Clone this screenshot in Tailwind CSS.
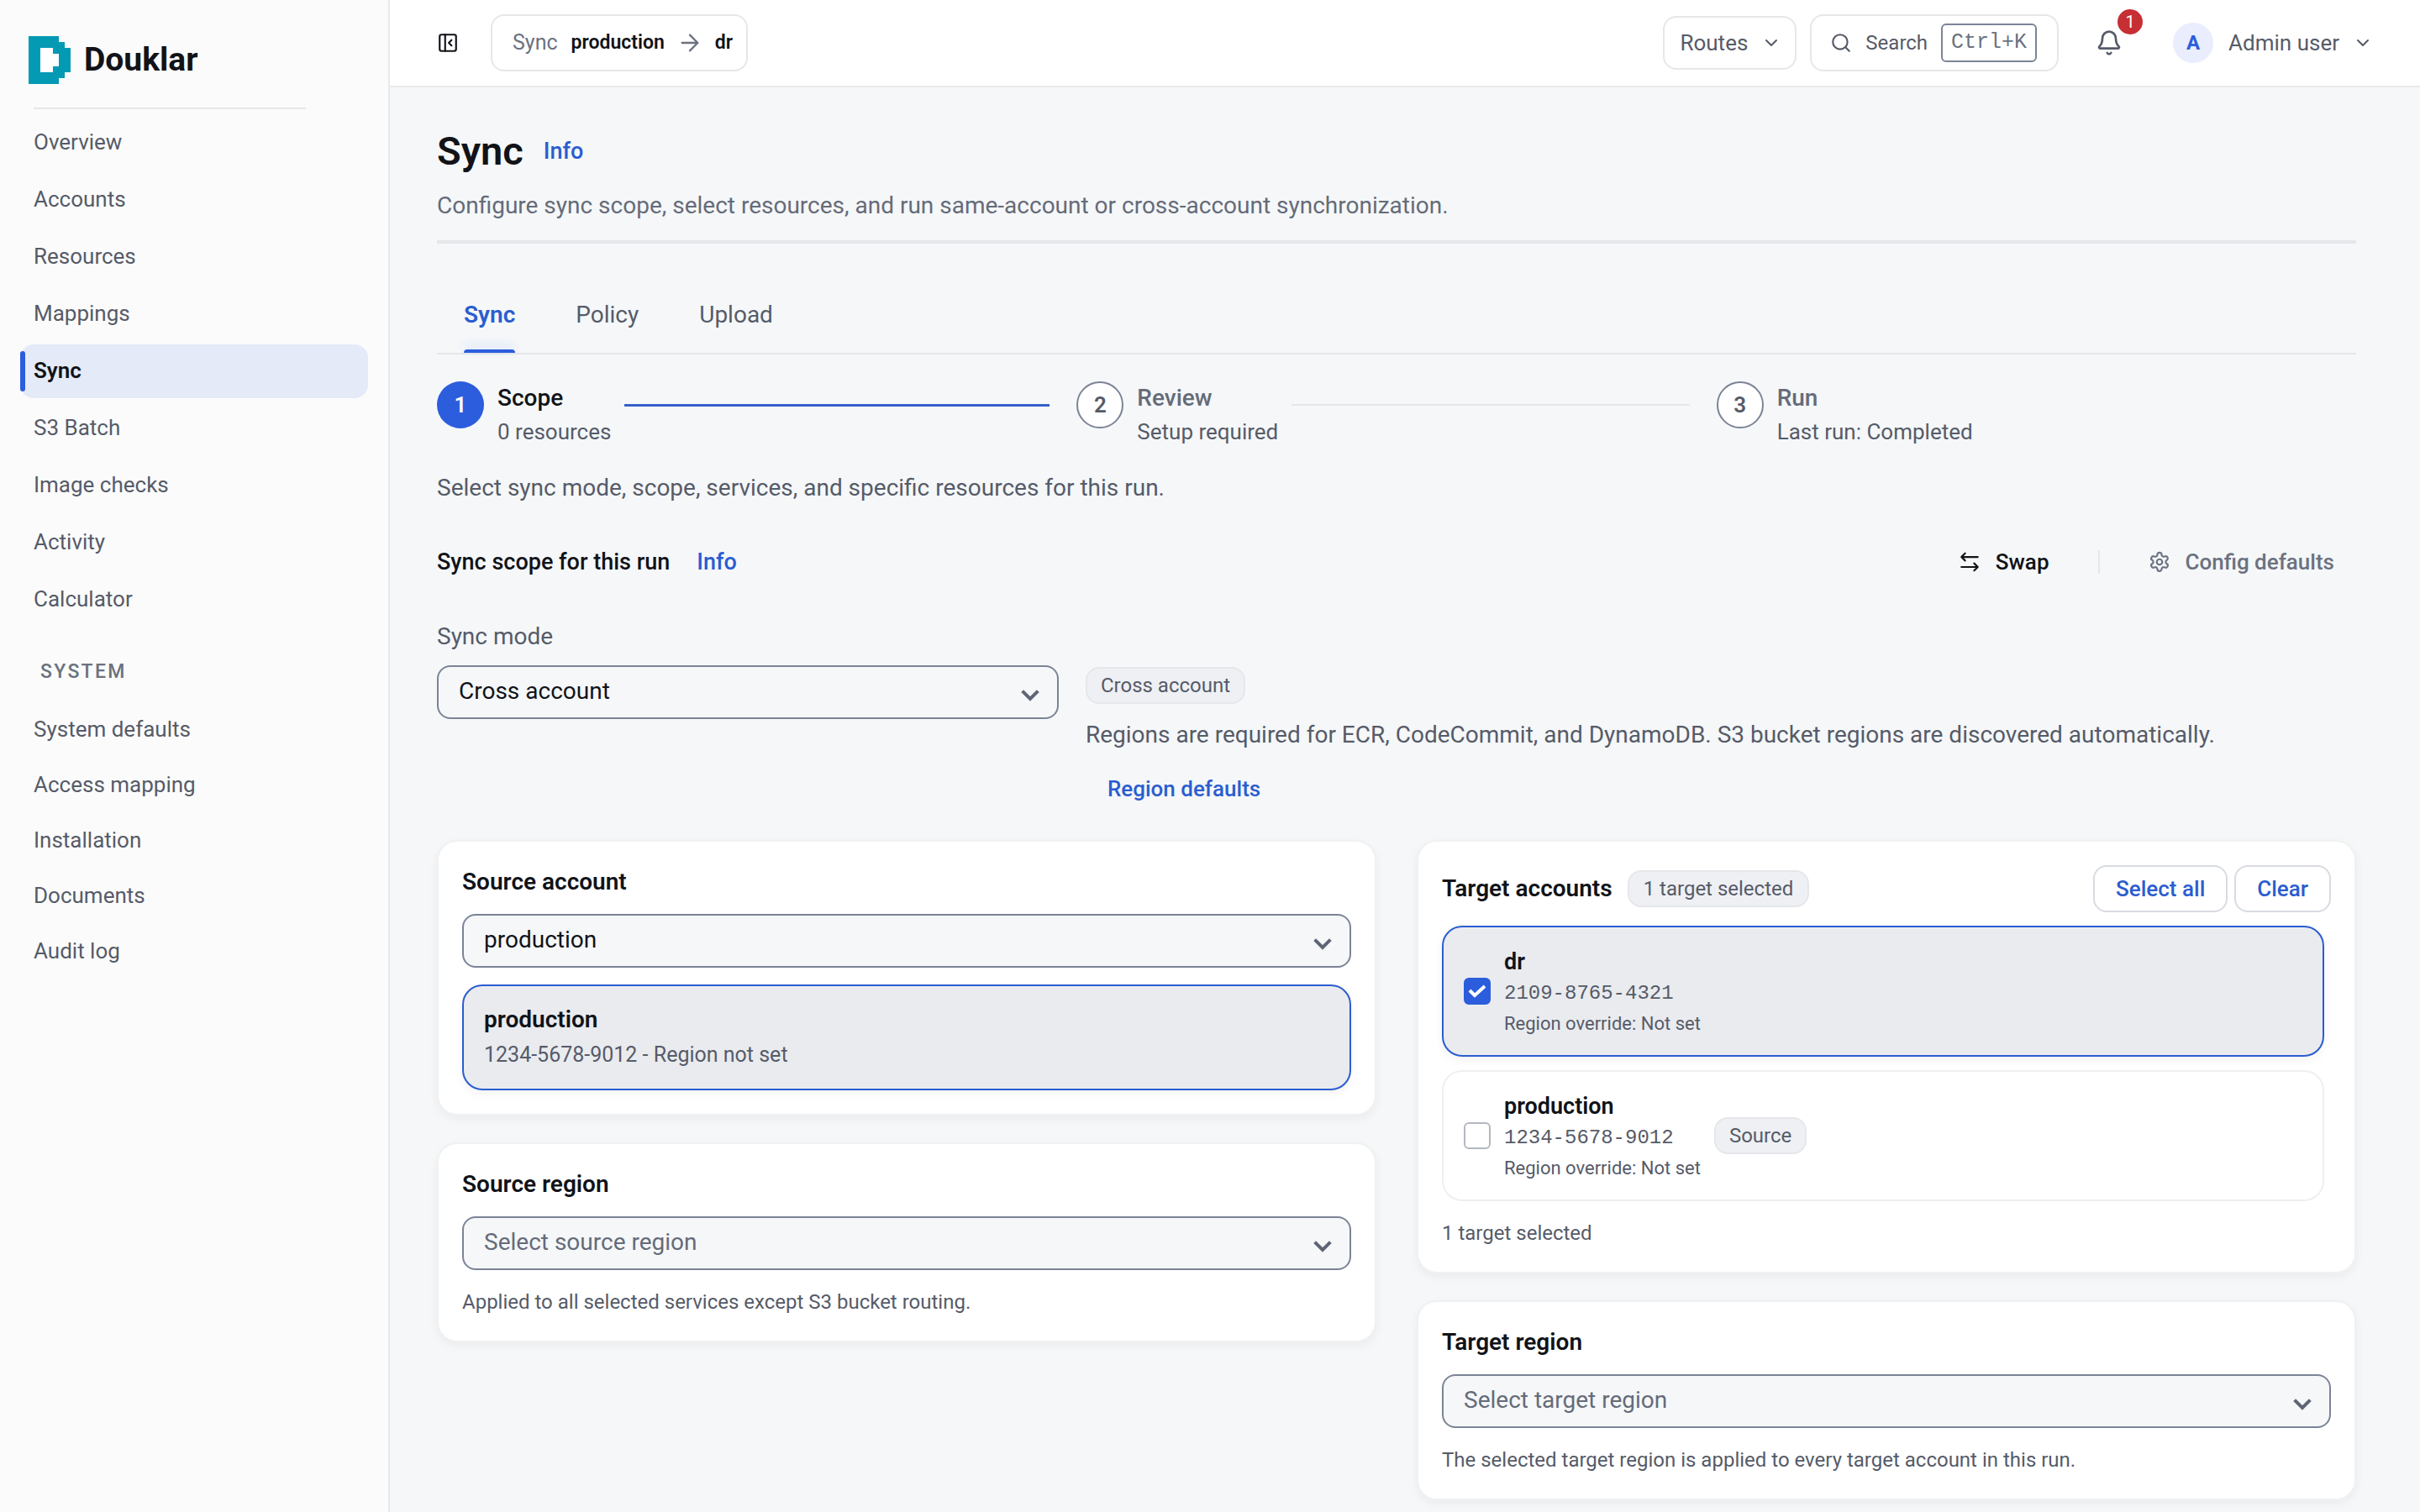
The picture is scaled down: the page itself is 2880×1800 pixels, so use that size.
<!DOCTYPE html>
<html lang="en">
<head>
<meta charset="utf-8">
<meta name="viewport" content="width=device-width, initial-scale=1">
<title>Sync - Douklar</title>
<script src="https://cdn.jsdelivr.net/npm/@tailwindcss/browser@4"></script>
</head>
<body class="flex min-h-screen bg-[#f5f7f9] font-['Roboto',sans-serif] text-[28px] leading-10 text-[#565b68]">

<aside class="w-[464px] shrink-0 border-r-2 border-[#e8e9eb] bg-[#fbfbfb] pb-8 text-[26px]">
  <a href="#" class="ml-[34px] flex h-32 items-center gap-4 pt-[14px] text-[39px] font-bold text-[#111318]">
    <svg class="h-[57px] w-[50px]" viewBox="0 0 7 8" fill="#059ab4" shape-rendering="crispEdges" aria-hidden="true"><path fill-rule="evenodd" d="M0 0H5V1H6V2H7V6H6V7H5V8H0ZM2 2V6H4V5H5V3H4V2Z"/><path fill="#fff" d="M2 2H4V3H5V5H4V6H2Z"/></svg>
    Douklar
  </a>
  <hr class="mr-[98px] ml-10 border-t-2 border-[#e5e7e9]">
  <nav class="mt-2 mr-6 ml-6 flex flex-col gap-1" aria-label="Main">
    <a href="#" class="flex h-16 items-center px-4 pb-[2px]">Overview</a>
    <a href="#" class="flex h-16 items-center px-4 pb-[2px]">Accounts</a>
    <a href="#" class="flex h-16 items-center px-4 pb-[2px]">Resources</a>
    <a href="#" class="flex h-16 items-center px-4 pb-[2px]">Mappings</a>
    <a href="#" aria-current="page" class="relative flex h-16 items-center rounded-2xl bg-[#e5eaf8] px-4 pb-[2px] font-semibold text-[#111318]"><span class="absolute top-2 left-0 h-12 w-[6px] rounded-full bg-[#2b5ddc]"></span>Sync</a>
    <a href="#" class="flex h-16 items-center px-4 pb-[2px]">S3 Batch</a>
    <a href="#" class="flex h-16 items-center px-4 pb-[2px]">Image checks</a>
    <a href="#" class="flex h-16 items-center px-4 pb-[2px]">Activity</a>
    <a href="#" class="flex h-16 items-center px-4 pb-[2px]">Calculator</a>
  </nav>
  <h2 class="mt-[34px] ml-12 text-[23px] font-medium tracking-widest text-[#6b7280]">SYSTEM</h2>
  <nav class="mt-4 mr-6 ml-6 flex flex-col gap-[2px]" aria-label="System">
    <a href="#" class="flex h-16 items-center px-4">System defaults</a>
    <a href="#" class="flex h-16 items-center px-4">Access mapping</a>
    <a href="#" class="flex h-16 items-center px-4">Installation</a>
    <a href="#" class="flex h-16 items-center px-4">Documents</a>
    <a href="#" class="flex h-16 items-center px-4">Audit log</a>
  </nav>
</aside>

<div class="min-w-0 flex-1">
  <header class="flex h-[104px] items-center border-b-2 border-[#eaebed] bg-white pr-14 pl-14 text-[26px]">
    <button class="text-[#111318]" aria-label="Collapse sidebar">
      <svg class="size-[26px]" viewBox="0 0 24 24" fill="none" stroke="currentColor" stroke-width="2" stroke-linecap="round" stroke-linejoin="round"><rect x="3" y="3" width="18" height="18" rx="2"/><path d="M9 3v18M16 15l-3-3 3-3"/></svg>
    </button>
    <div class="ml-[38px] flex h-[68px] items-center rounded-2xl border-2 border-[#e5e7e9] pr-4 pl-6 text-[23px]">
      <span class="text-[25px] text-[#6b7280]">Sync</span>
      <strong class="ml-4 font-semibold text-[#111318]">production</strong>
      <svg class="mx-4 size-7 text-[#6b7280]" viewBox="0 0 24 24" fill="none" stroke="currentColor" stroke-width="2" stroke-linecap="round" stroke-linejoin="round"><path d="M4 12h16M12 4l8 8-8 8"/></svg>
      <strong class="font-semibold text-[#111318]">dr</strong>
    </div>
    <button class="ml-auto flex h-16 items-center gap-4 rounded-2xl border-2 border-[#e5e7e9] pr-4 pl-[18px]">Routes
      <svg class="size-6" viewBox="0 0 24 24" fill="none" stroke="currentColor" stroke-width="2" stroke-linecap="round" stroke-linejoin="round"><path d="M6 9l6 6 6-6"/></svg>
    </button>
    <button class="ml-4 flex h-[68px] items-center rounded-2xl border-2 border-[#e5e7e9] pr-6 pl-[22px] text-[24px]">
      <svg class="size-[26px]" viewBox="0 0 24 24" fill="none" stroke="currentColor" stroke-width="2" stroke-linecap="round"><circle cx="11" cy="11" r="8"/><path d="M21 21l-4.3-4.3"/></svg>
      <span class="mr-4 ml-4">Search</span>
      <kbd class="flex h-[46px] items-center rounded-md border-2 border-[#7b8496] px-[10px] font-['Liberation_Mono',monospace] text-[25px] text-[#6b7280]">Ctrl+K</kbd>
    </button>
    <button class="relative ml-11 h-8 w-8" aria-label="Notifications">
      <svg class="size-8" viewBox="0 0 24 24" fill="none" stroke="currentColor" stroke-width="2" stroke-linecap="round" stroke-linejoin="round"><path d="M10.3 21a1.9 1.9 0 0 0 3.4 0M3.3 15.3A1 1 0 0 0 4 17h16a1 1 0 0 0 .7-1.7C19.4 14 18 12.5 18 8A6 6 0 0 0 6 8c0 4.500-1.400 6-2.700 7.300Z"/></svg>
      <span class="absolute -top-6 left-[26px] flex size-[30px] items-center justify-center rounded-full bg-[#c62f33] text-[20px] leading-none text-white">1</span>
    </button>
    <button class="ml-[60px] flex items-center">
      <span class="flex size-12 items-center justify-center rounded-full bg-[#e9edfd] text-[24px] font-bold text-[#2b5ddc]">A</span>
      <span class="mr-4 ml-[18px]">Admin user</span>
      <svg class="size-6" viewBox="0 0 24 24" fill="none" stroke="currentColor" stroke-width="2" stroke-linecap="round" stroke-linejoin="round"><path d="M6 9l6 6 6-6"/></svg>
    </button>
  </header>

  <main class="pt-12 pr-[76px] pb-3 pl-14">
    <div class="border-b-4 border-[#e5e7ea] pb-[21px]">
      <div class="flex items-center gap-6">
        <h1 class="text-[47px] leading-[56px] font-semibold text-[#111318]">Sync</h1>
        <a href="#" class="text-[27px] font-medium text-[#2b5dd0]">Info</a>
      </div>
      <p class="mt-[17px] text-[#656b78]">Configure sync scope, select resources, and run same-account or cross-account synchronization.</p>
    </div>

    <div class="mt-10 flex gap-2 border-b-2 border-[#e5e7ea]" role="tablist">
      <button role="tab" aria-selected="true" class="px-8 pt-[25px] font-semibold text-[#2b5dd0]">Sync<span class="mt-[21px] block h-1 rounded-t-sm bg-[#2b5ddc] shadow-[0_-4px_12px_#2b5ddc33]"></span></button>
      <button role="tab" aria-selected="false" class="px-8 pt-[25px] pb-[25px]">Policy</button>
      <button role="tab" aria-selected="false" class="px-8 pt-[25px] pb-[25px]">Upload</button>
    </div>

    <ol class="mt-8 grid grid-cols-3">
      <li class="flex gap-4 pr-8">
        <span class="flex size-14 shrink-0 items-center justify-center rounded-full bg-[#2b5ddc] text-[26px] font-semibold text-white">1</span>
        <div><p class="font-medium text-[#111318]">Scope</p><p class="text-[26px]">0 resources</p></div>
        <span class="mt-[27px] h-[3px] flex-1 bg-[#3560cc]"></span>
      </li>
      <li class="flex gap-4 pr-8">
        <span class="flex size-14 shrink-0 items-center justify-center rounded-full border-2 border-[#7b8496] bg-white text-[26px] font-semibold">2</span>
        <div><p class="font-medium text-[#656b78]">Review</p><p class="text-[26px]">Setup required</p></div>
        <span class="mt-[27px] h-[2px] flex-1 bg-[#e5e7ea]"></span>
      </li>
      <li class="flex gap-4">
        <span class="flex size-14 shrink-0 items-center justify-center rounded-full border-2 border-[#7b8496] bg-white text-[26px] font-semibold">3</span>
        <div><p class="font-medium text-[#656b78]">Run</p><p class="text-[26px]">Last run: Completed</p></div>
      </li>
    </ol>
    <p class="mt-[27px]">Select sync mode, scope, services, and specific resources for this run.</p>

    <div class="mt-9 flex h-16 items-center">
      <h2 class="text-[27px] font-medium text-[#111318]">Sync scope for this run</h2>
      <a href="#" class="ml-8 text-[27px] font-medium text-[#2b5dd0]">Info</a>
      <button class="ml-auto flex items-center gap-[18px] text-[26px] font-medium text-[#111318]">
        <svg class="size-[26px]" viewBox="0 0 24 24" fill="none" stroke="currentColor" stroke-width="2" stroke-linecap="round" stroke-linejoin="round"><path d="M21 6.500H3M7 2.500l-4 4 4 4M3 17.500h18M17 13.500l4 4-4 4"/></svg>
        Swap
      </button>
      <span class="ml-[58px] h-7 w-[2px] bg-[#e5e7ea]"></span>
      <button class="mr-[26px] ml-[58px] flex items-center gap-[18px] text-[26px] font-medium text-[#6b7280]">
        <svg class="size-[26px]" viewBox="0 0 24 24" fill="none" stroke="currentColor" stroke-width="2" stroke-linecap="round" stroke-linejoin="round"><path d="M9.7 4.100a2.300 2.300 0 0 1 4.600 0 2.300 2.300 0 0 0 3.300 1.900 2.300 2.300 0 0 1 2.300 4 2.300 2.300 0 0 0 0 3.900 2.300 2.300 0 0 1-2.300 4 2.300 2.300 0 0 0-3.300 1.900 2.300 2.300 0 0 1-4.600 0 2.300 2.300 0 0 0-3.300-1.900 2.300 2.300 0 0 1-2.300-4 2.300 2.300 0 0 0 0-3.900 2.300 2.300 0 0 1 2.300-4 2.300 2.300 0 0 0 3.300-1.900"/><circle cx="12" cy="12" r="3"/></svg>
        Config defaults
      </button>
    </div>

    <div class="mt-[37px] grid grid-cols-[23fr_47fr] gap-8">
      <div>
        <label for="mode" class="block">Sync mode</label>
        <div class="relative mt-[14px]">
          <select id="mode" class="block h-16 w-full appearance-none rounded-2xl border-2 border-[#7b8496] bg-[#f5f7f9] px-6 pb-[2px] text-[#111318]"><option>Cross account</option><option>Same account</option></select>
          <svg class="pointer-events-none absolute top-5 right-[18px] size-8 text-[#5f6575]" viewBox="0 0 24 24" fill="none" stroke="currentColor" stroke-width="3"><path d="M5 8l7 7 7-7"/></svg>
        </div>
      </div>
      <div class="flex flex-col items-start pt-14">
        <span class="flex h-11 items-center rounded-2xl border-2 border-[#e5e7ea] bg-[#eef0f4] px-4 text-[24px]">Cross account</span>
        <p class="mt-[17px]">Regions are required for ECR, CodeCommit, and DynamoDB. S3 bucket regions are discovered automatically.</p>
        <button class="mt-3 h-16 px-[26px] text-[26px] font-medium text-[#2b5dd0]">Region defaults</button>
      </div>
    </div>

    <div class="mt-[29px] grid grid-cols-2 items-start gap-12">
      <div class="flex flex-col gap-8">
        <section class="rounded-3xl border-2 border-[#f0f1f2] bg-white p-7 shadow-[0_4px_12px_#0000000d]">
          <label for="src" class="block font-semibold text-[#111318]">Source account</label>
          <div class="relative mt-[18px]">
            <select id="src" class="block h-16 w-full appearance-none rounded-2xl border-2 border-[#7b8496] bg-[#f5f7f9] px-6 pb-[2px] text-[#111318]"><option>production</option><option>dr</option></select>
            <svg class="pointer-events-none absolute top-5 right-[18px] size-8 text-[#5f6575]" viewBox="0 0 24 24" fill="none" stroke="currentColor" stroke-width="3"><path d="M5 8l7 7 7-7"/></svg>
          </div>
          <div class="mt-5 flex flex-col gap-[2px] rounded-3xl border-2 border-[#2b5dd0] bg-[#e9ebef] px-6 py-5 shadow-[0_4px_12px_#0000000d]">
            <p class="font-semibold text-[#111318]">production</p>
            <p class="text-[25px]">1234-5678-9012 - Region not set</p>
          </div>
        </section>
        <section class="rounded-3xl border-2 border-[#f0f1f2] bg-white p-7 shadow-[0_4px_12px_#0000000d]">
          <label for="srcregion" class="block font-semibold text-[#111318]">Source region</label>
          <div class="relative mt-[18px]">
            <select id="srcregion" class="block h-16 w-full appearance-none rounded-2xl border-2 border-[#7b8496] bg-[#f5f7f9] px-6 pb-[2px] text-[#656b78]"><option>Select source region</option></select>
            <svg class="pointer-events-none absolute top-5 right-[18px] size-8 text-[#5f6575]" viewBox="0 0 24 24" fill="none" stroke="currentColor" stroke-width="3"><path d="M5 8l7 7 7-7"/></svg>
          </div>
          <p class="mt-5 text-[24px] leading-9">Applied to all selected services except S3 bucket routing.</p>
        </section>
      </div>

      <div class="flex flex-col gap-8">
        <section class="rounded-3xl border-2 border-[#f0f1f2] bg-white p-7 shadow-[0_4px_12px_#0000000d]">
          <div class="flex items-center">
            <h3 class="font-semibold text-[#111318]">Target accounts</h3>
            <span class="ml-[18px] flex h-11 items-center rounded-2xl border-2 border-[#e5e7ea] bg-[#eef0f4] px-[17px] text-[24px]">1 target selected</span>
            <button class="ml-auto h-14 rounded-2xl border-2 border-[#d8dbe1] px-[25px] text-[26px] font-medium text-[#2b5dd0]">Select all</button>
            <button class="ml-2 h-14 rounded-2xl border-2 border-[#d8dbe1] px-[25px] text-[26px] font-medium text-[#2b5dd0]">Clear</button>
          </div>
          <div class="mt-4 flex flex-col gap-4 pr-2">
            <label class="flex h-[156px] items-center gap-4 rounded-3xl border-2 border-[#2b5dd0] bg-[#e9ebef] px-6 shadow-[0_4px_12px_#0000000d]">
              <span class="relative size-8">
                <input type="checkbox" checked class="peer block size-8 appearance-none rounded-md border-2 border-[#b4b8c0] bg-white checked:border-[#2b5ddc] checked:bg-[#2b5ddc]">
                <svg class="pointer-events-none absolute inset-1 hidden size-6 peer-checked:block" viewBox="0 0 24 24" fill="none" stroke="#fff" stroke-width="4"><path d="M3 11l6 6L21 6"/></svg>
              </span>
              <span class="pt-[2px]">
                <span class="block text-[27px] font-semibold text-[#111318]">dr</span>
                <span class="block font-['Liberation_Mono',monospace] text-[24px] leading-9">2109-8765-4321</span>
                <span class="block text-[22px] leading-9">Region override: Not set</span>
              </span>
            </label>
            <label class="flex h-[156px] items-center gap-4 rounded-3xl border-2 border-[#eeeff1] px-6">
              <span class="relative size-8">
                <input type="checkbox" class="peer block size-8 appearance-none rounded-md border-2 border-[#b4b8c0] bg-white checked:border-[#2b5ddc] checked:bg-[#2b5ddc]">
                <svg class="pointer-events-none absolute inset-1 hidden size-6 peer-checked:block" viewBox="0 0 24 24" fill="none" stroke="#fff" stroke-width="4"><path d="M3 11l6 6L21 6"/></svg>
              </span>
              <span class="pt-[2px]">
                <span class="block text-[27px] font-semibold text-[#111318]">production</span>
                <span class="block font-['Liberation_Mono',monospace] text-[24px] leading-9">1234-5678-9012</span>
                <span class="block text-[22px] leading-9">Region override: Not set</span>
              </span>
              <span class="flex h-11 items-center rounded-2xl border-2 border-[#e5e7ea] bg-[#eef0f4] px-4 text-[24px]">Source</span>
            </label>
          </div>
          <p class="mt-5 text-[24px] leading-9">1 target selected</p>
        </section>
        <section class="rounded-3xl border-2 border-[#f0f1f2] bg-white p-7 shadow-[0_4px_12px_#0000000d]">
          <label for="dstregion" class="block font-semibold text-[#111318]">Target region</label>
          <div class="relative mt-[18px]">
            <select id="dstregion" class="block h-16 w-full appearance-none rounded-2xl border-2 border-[#7b8496] bg-[#f5f7f9] px-6 pb-[2px] text-[#656b78]"><option>Select target region</option></select>
            <svg class="pointer-events-none absolute top-5 right-[18px] size-8 text-[#5f6575]" viewBox="0 0 24 24" fill="none" stroke="currentColor" stroke-width="3"><path d="M5 8l7 7 7-7"/></svg>
          </div>
          <p class="mt-5 text-[24px] leading-9">The selected target region is applied to every target account in this run.</p>
        </section>
      </div>
    </div>
  </main>
</div>
</body>
</html>
